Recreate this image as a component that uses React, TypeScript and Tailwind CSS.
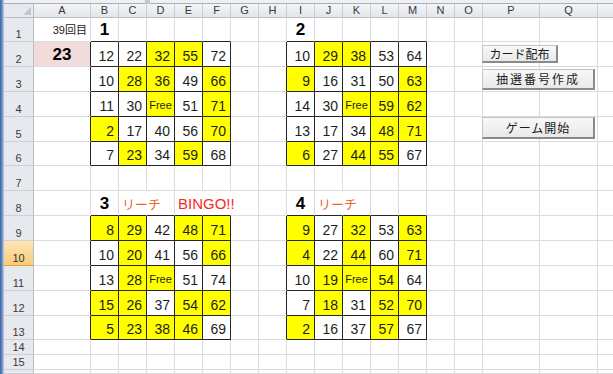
import React from 'react';

const COLS = ['A', 'B', 'C', 'D', 'E', 'F', 'G', 'H', 'I', 'J', 'K', 'L', 'M', 'N', 'O', 'P', 'Q'];
const ROW_COUNT = 16;

// each card: top-left row / column index, "*" marks a hit cell
const cards = [
  {
    r: 2,
    c: 1,
    rows: ['12 22 32* 55* 72', '10 28* 36* 49 66*', '11 30 Free* 51 71*', '2* 17 40 56 70*', '7 23* 34 59* 68'],
  },
  {
    r: 2,
    c: 8,
    rows: ['10 29* 38* 53 64', '9* 16 31 50 63*', '14 30 Free* 59* 62*', '13 17 34 48* 71*', '6* 27 44* 55* 67'],
  },
  {
    r: 9,
    c: 1,
    rows: ['8* 29* 42 48* 71*', '10 20* 41 56 66*', '13 28* Free* 51 74', '15* 26* 37 54* 62*', '5* 23* 38* 46* 69'],
  },
  {
    r: 9,
    c: 8,
    rows: ['9* 27 32* 53 63*', '4* 22 44* 60 71*', '10 19* Free* 54* 64', '7 18* 31 52* 70*', '2* 16 37 57* 67'],
  },
];

type Cell = {
  text?: string;
  hit?: boolean;
  boxed?: boolean;
  edgeR?: boolean;
  edgeB?: boolean;
  noR?: boolean;
  cls?: string;
  bg?: string;
};

const sheet: Record<string, Cell> = {};
const at = (r: number, c: number) => {
  const k = `${r}-${c}`;
  if (!sheet[k]) sheet[k] = {};
  return sheet[k];
};

cards.forEach((card) => {
  card.rows.forEach((line, i) => {
    line.split(' ').forEach((v, j) => {
      const cell = at(card.r + i, card.c + j);
      cell.hit = v.endsWith('*');
      cell.text = v.replace('*', '');
      cell.boxed = true;
      if (i === 0) at(card.r - 1, card.c + j).edgeB = true;
      if (j === 0) at(card.r + i, card.c - 1).edgeR = true;
    });
  });
});

const label = 'justify-center pb-[3px] text-[17px] font-bold text-black';
const reach = 'justify-start pl-[3px] pb-[4px] text-[13px] text-[#ef6428]';
Object.assign(at(1, 0), { text: '39回目', cls: 'justify-end pr-[3px] pb-[5px] text-[11px] text-[#222]' });
Object.assign(at(2, 0), { text: '23', cls: 'justify-center pb-[3px] text-[17px] font-bold text-black', bg: 'bg-[#f2dcdb]' });
Object.assign(at(1, 1), { text: '1', cls: label });
Object.assign(at(1, 8), { text: '2', cls: label });
Object.assign(at(8, 1), { text: '3', cls: label });
Object.assign(at(8, 8), { text: '4', cls: label });
Object.assign(at(8, 2), { text: 'リーチ', noR: true, cls: reach });
Object.assign(at(8, 4), { text: 'BINGO!!', noR: true, cls: 'justify-start pl-[3px] pb-[4px] text-[15px] text-[#f52a1e]' });
at(8, 5).noR = true;
Object.assign(at(8, 9), { text: 'リーチ', noR: true, cls: reach });

function SheetCell({ r, c }: { r: number; c: number }) {
  const cell = sheet[`${r}-${c}`] || {};
  const right = cell.boxed || cell.edgeR ? 'border-r-[#262626]' : cell.noR ? 'border-r-transparent' : 'border-r-[#dadcdd]';
  const bottom = cell.boxed || cell.edgeB ? 'border-b-[#262626]' : 'border-b-[#dadcdd]';
  const bg = cell.hit ? 'bg-[#ffff00]' : cell.bg || 'bg-transparent';
  let content = 'justify-end pr-[4px] pb-[3px] text-[14px] text-[#1e1e1e]';
  if (cell.text === 'Free') content = 'justify-center pb-[5px] text-[11px] text-[#1e1e1e]';
  if (cell.cls) content = cell.cls;

  return (
    <div className={`flex items-end whitespace-nowrap leading-none border-r border-b ${right} ${bottom} ${bg} ${content}`}>
      {cell.text}
    </div>
  );
}

function Button({ label, className }: { label: string; className: string }) {
  return (
    <div
      className={`absolute flex items-center justify-center bg-gradient-to-b from-[#f8f8f8] to-[#e9e9e9] border border-[#c4c4c4] border-r-2 border-b-2 border-r-[#8a8a8a] border-b-[#8a8a8a] text-[12px] text-[#1a1a1a] font-['Noto_Sans_CJK_JP',sans-serif] ${className}`}
    >
      {label}
    </div>
  );
}

export default function App() {
  const rows = Array.from({ length: ROW_COUNT }, (_, i) => i + 1);

  return (
    <div className="relative w-[613px] h-[374px] overflow-hidden bg-white flex font-['Liberation_Sans','Noto_Sans_CJK_JP',sans-serif]">
      {/* window edge */}
      <div className="w-[4px] h-full bg-gradient-to-r from-[#3e63a0] via-[#6b8cc4] to-[#c9d3e0]" />

      <div className="flex-1 flex flex-col">
        {/* formula bar edge */}
        <div className="h-[5px] bg-[#eef0f3] border-b border-[#a8afb8] relative">
          <div className="absolute left-[141px] top-0 w-[5px] h-[4px] bg-[#c3c8cf]" />
        </div>

        <div className="flex-1 grid grid-cols-[30px_57px_repeat(14,28px)_57px_58px_1fr] grid-rows-[14px_24px_25px_25px_25px_25px_24px_25px_25px_25px_25px_25px_25px_24px_15px_15px_1fr]">
          {/* corner */}
          <div className="relative bg-[#e6e9ed] border-r border-b border-[#b9bec6]">
            <svg className="absolute right-[2px] bottom-[2px]" width="8" height="8" viewBox="0 0 8 8">
              <polygon points="8,0 8,8 0,8" fill="#c2c7ce" />
            </svg>
          </div>
          {COLS.map((name) => (
            <div
              key={name}
              className="flex items-center justify-center bg-gradient-to-b from-[#f3f4f6] to-[#e3e6ea] border-r border-b border-r-[#c9cdd3] border-b-[#b9bec6] text-[11px] leading-none text-[#3a3a3a]"
            >
              {name}
            </div>
          ))}
          <div className="bg-gradient-to-b from-[#f3f4f6] to-[#e3e6ea] border-b border-[#b9bec6]" />

          {rows.map((r) => (
            <React.Fragment key={r}>
              <div
                className={
                  r === 10
                    ? 'flex items-end justify-center pb-[1px] bg-gradient-to-b from-[#fde5b4] to-[#f9cc7a] border-r border-b border-r-[#b9bec6] border-b-[#f0a030] text-[11px] leading-none text-[#333]'
                    : 'flex items-end justify-center pb-[1px] bg-[#e6e9ed] border-r border-b border-r-[#b9bec6] border-b-[#cdd1d7] text-[11px] leading-none text-[#3a3a3a]'
                }
              >
                {r < ROW_COUNT ? r : ''}
              </div>
              {COLS.map((_, c) => (
                <SheetCell key={c} r={r} c={c} />
              ))}
              <div className="border-b border-[#dadcdd]" />
            </React.Fragment>
          ))}
        </div>
      </div>

      <Button label="カード配布" className="left-[482px] top-[45px] w-[76px] h-[18px]" />
      <Button label="抽選番号作成" className="left-[482px] top-[69px] w-[113px] h-[21px] tracking-[2px]" />
      <Button label="ゲーム開始" className="left-[482px] top-[117px] w-[113px] h-[22px] tracking-[1px]" />
    </div>
  );
}
